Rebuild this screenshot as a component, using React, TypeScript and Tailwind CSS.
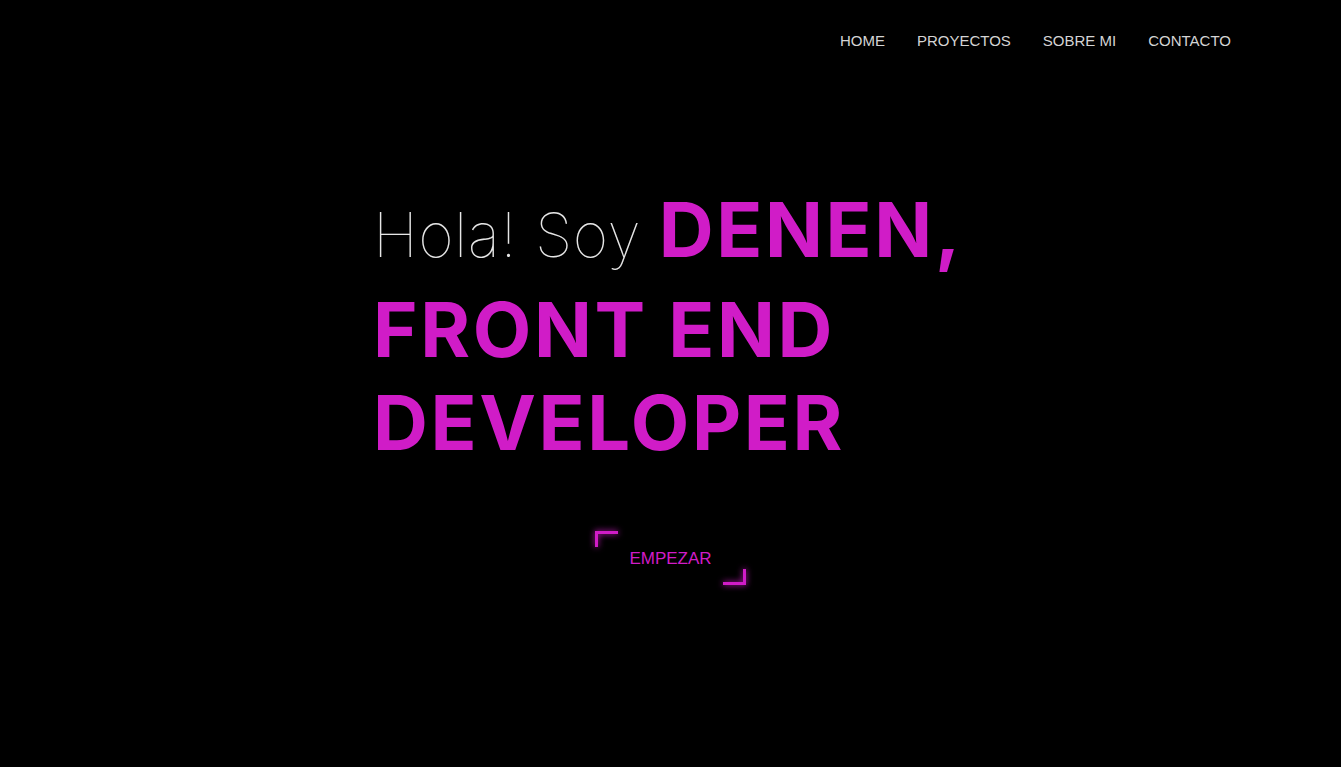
const NAV_LINKS = ["HOME", "PROYECTOS", "SOBRE MI", "CONTACTO"];

const Corner = ({ flip }: { flip?: boolean }) => (
  <svg
    width="23"
    height="16"
    viewBox="0 0 23 16"
    className={`absolute drop-shadow-[0_0_3px_#d01cc7] ${
      flip ? "right-0 bottom-0 rotate-180" : "left-0 top-0"
    }`}
  >
    <path d="M1.5 16 V1.5 H23" fill="none" stroke="#d01cc7" strokeWidth="3" />
  </svg>
);

export default function App() {
  return (
    <div className="min-h-[767px] w-full bg-black font-['Liberation_Sans',Arial,sans-serif]">
      <nav className="flex h-[82px] items-center justify-end gap-[32px] pr-[110px]">
        {NAV_LINKS.map((link) => (
          <a key={link} href="#" className="text-[15px] text-[#d4d4d4]">
            {link}
          </a>
        ))}
      </nav>

      <main className="mx-auto w-[595px] pt-[101px]">
        <h1 className="font-['Inter',sans-serif] text-[76px] leading-[93px] tracking-[2.6px] text-[#d01cc7]">
          <div className="mb-[7px] whitespace-nowrap">
            <span className="text-[61px] leading-none font-thin tracking-[0.5px] text-[#e6e6e6]">
              Hola! Soy{" "}
            </span>
            <span className="font-bold">DENEN,</span>
          </div>
          <div className="font-bold">FRONT END</div>
          <div className="font-bold">DEVELOPER</div>
        </h1>

        <div className="mt-[62px] flex justify-center">
          <button className="relative flex h-[54px] w-[151px] items-center justify-center pt-[1px] text-[17px] text-[#d01cc7]">
            <Corner />
            EMPEZAR
            <Corner flip />
          </button>
        </div>
      </main>
    </div>
  );
}
